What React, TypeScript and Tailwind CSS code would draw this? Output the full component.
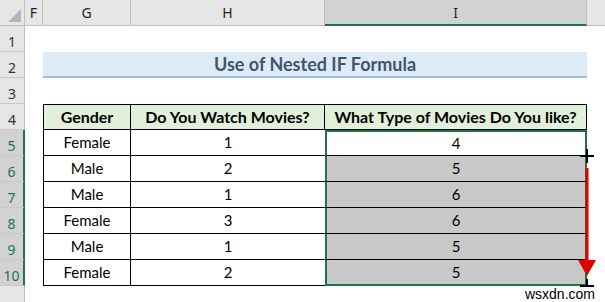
import React from "react";

const rows = [
  { g: "Female", h: "1", i: "4" },
  { g: "Male", h: "2", i: "5" },
  { g: "Male", h: "1", i: "6" },
  { g: "Female", h: "3", i: "6" },
  { g: "Male", h: "1", i: "5" },
  { g: "Female", h: "2", i: "5" },
];

const font = { fontFamily: "Lato, 'Open Sans', sans-serif" };

function RowHead({ n, selected }: { n: number; selected?: boolean }) {
  return (
    <div
      className={
        "flex items-end justify-center pb-[2px] border-b border-[#c8c8c8] text-[14px] leading-none " +
        (selected
          ? "bg-[#d2d2d2] text-[#217346] border-r-2 border-r-[#217346]"
          : "bg-[#e6e6e6] text-[#333] border-r border-r-[#bfbfbf]")
      }
      style={{ fontFamily: "'Noto Sans', sans-serif" }}
    >
      {n}
    </div>
  );
}

export default function App() {
  return (
    <div className="relative w-[605px] h-[302px] overflow-hidden bg-white" style={font}>
      <div className="grid grid-cols-[25px_18px_88px_194px_262px_18px] grid-rows-[26px_repeat(10,26px)_16px]">
        {/* column headers */}
        <div className="flex items-end justify-end p-[3px] bg-[#e6e6e6] border-b border-r border-[#bfbfbf]">
          <svg width="13" height="13" viewBox="0 0 13 13">
            <polygon points="13,0 13,13 0,13" fill="#b4b4b4" />
          </svg>
        </div>
        {["F", "G", "H"].map((c) => (
          <div
            key={c}
            className="flex items-center justify-center bg-[#e6e6e6] border-b border-r border-[#bfbfbf] text-[14px] text-[#222]"
            style={{ fontFamily: "'Noto Sans', sans-serif" }}
          >
            {c}
          </div>
        ))}
        <div
          className="flex items-center justify-center bg-[#d2d2d2] border-b-2 border-b-[#217346] border-r border-r-[#bfbfbf] text-[14px] text-[#222]"
          style={{ fontFamily: "'Noto Sans', sans-serif" }}
        >
          I
        </div>
        <div className="bg-[#e6e6e6] border-b border-[#bfbfbf]" />

        {/* row 1 */}
        <RowHead n={1} />
        <div className="col-span-5" />

        {/* row 2: title */}
        <RowHead n={2} />
        <div />
        <div className="col-span-3 flex items-center justify-center bg-[#ddebf7] border-b-2 border-[#9bc2e6] text-[18px] font-bold text-[#44546a]">
          Use of Nested IF Formula
        </div>
        <div />

        {/* row 3 */}
        <RowHead n={3} />
        <div className="col-span-5" />

        {/* row 4: table header */}
        <RowHead n={4} />
        <div />
        {["Gender", "Do You Watch Movies?", "What Type of Movies Do You like?"].map((t, k) => (
          <div
            key={t}
            className={
              "flex items-center justify-center bg-[#e2efda] border-t border-b border-r border-black text-[16px] font-bold text-black " +
              (k === 0 ? "border-l" : "")
            }
          >
            {t}
          </div>
        ))}
        <div />

        {/* data rows */}
        {rows.map((r, idx) => (
          <React.Fragment key={idx}>
            <RowHead n={idx + 5} selected />
            <div />
            <div className="flex items-center justify-center border-l border-r border-b border-black text-[15px] text-black">
              {r.g}
            </div>
            <div className="flex items-center justify-center border-b border-black text-[15px] text-black">
              {r.h}
            </div>
            <div
              className={
                "flex items-center justify-center border-l-2 border-r-2 border-l-[#217346] border-r-[#217346] text-[15px] text-black " +
                (idx === 0 ? "bg-white border-t-2 border-t-[#217346] " : "bg-[#c8c8c8] ") +
                (idx === rows.length - 1
                  ? "border-b-2 border-b-[#217346]"
                  : "border-b border-b-black")
              }
            >
              {r.i}
            </div>
            <div />
          </React.Fragment>
        ))}

        {/* tail */}
        <div className="bg-[#e6e6e6] border-r border-[#bfbfbf]" />
        <div className="col-span-5" />
      </div>

      {/* fill handle drag overlay */}
      <svg className="absolute left-0 top-0 pointer-events-none" width="605" height="302">
        <line x1="587" y1="168" x2="587" y2="262" stroke="#e00000" strokeWidth="3" />
        <polygon points="578,260 596,260 587,276" fill="#e00000" />
        <line x1="580" y1="156" x2="594" y2="156" stroke="#000" strokeWidth="2" />
        <line x1="587" y1="149" x2="587" y2="163" stroke="#000" strokeWidth="2" />
        <line x1="580" y1="286" x2="594" y2="286" stroke="#000" strokeWidth="2" />
        <line x1="587" y1="279" x2="587" y2="293" stroke="#000" strokeWidth="2" />
      </svg>

      <div
        className="absolute right-[8px] bottom-[0px] bg-white px-[2px] text-[14px] leading-[15px] text-black"
        style={{ fontFamily: "'Liberation Sans', Arial, sans-serif" }}
      >
        wsxdn.com
      </div>
    </div>
  );
}
